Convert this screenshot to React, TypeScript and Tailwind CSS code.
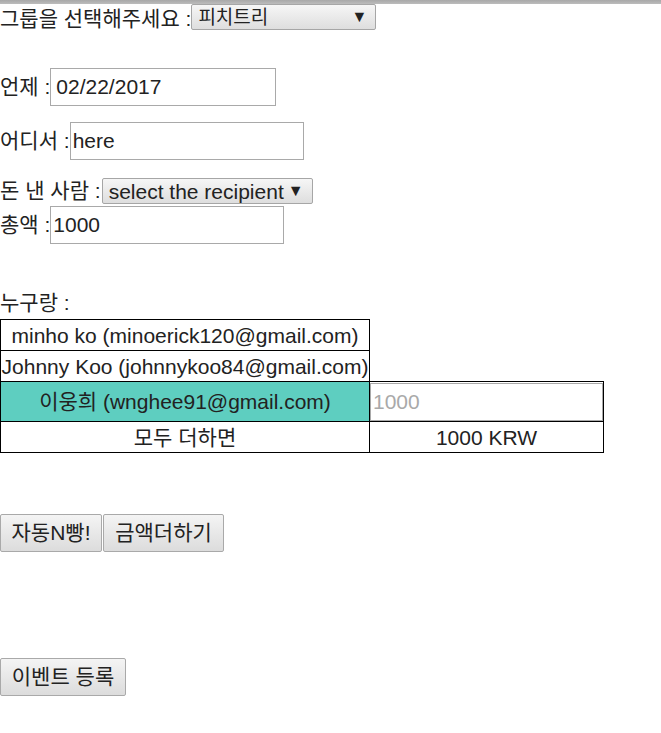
import React from 'react';

const font = { fontFamily: '"Liberation Sans", Arial, "Noto Sans CJK KR", sans-serif' };

function Select({ value, className }: { value: string; className: string }) {
  return (
    <div
      className={`flex items-center justify-between border border-[#a6a6a6] rounded-[2px] bg-gradient-to-b from-[#f6f6f6] to-[#dedede] pl-[6px] pr-[8px] ${className}`}
    >
      <span className="leading-none">{value}</span>
      <span className="text-[16px] leading-none text-[#222]">▼</span>
    </div>
  );
}

function Field({ label, value, width }: { label: string; value: string; width: string }) {
  return (
    <div className="flex items-center h-[38px]">
      <span className="whitespace-pre">{label}</span>
      <div className={`h-[38px] border border-[#a9a9a9] flex items-center px-[2px] ${width}`}>{value}</div>
    </div>
  );
}

function Button({ children, className = '' }: { children: React.ReactNode; className?: string }) {
  return (
    <button
      className={`h-[38px] px-[10px] border border-[#a9a9a9] rounded-[2px] bg-gradient-to-b from-[#f4f4f4] to-[#dcdcdc] text-[#222] ${className}`}
    >
      {children}
    </button>
  );
}

export default function App() {
  const members = ['minho ko (minoerick120@gmail.com)', 'Johnny Koo (johnnykoo84@gmail.com)'];

  return (
    <div className="w-[661px] h-[733px] bg-white text-[21px] text-[#222] overflow-hidden" style={font}>
      <div className="h-[4px] bg-gradient-to-b from-[#a8a8a8] to-[#bcbcbc]" />

      <div className="flex items-center h-[26px]">
        <span className="whitespace-pre mt-[3px]">그룹을 선택해주세요 :</span>
        <Select value="피치트리" className="w-[185px] h-[26px] text-[19px]" />
      </div>

      <div className="mt-[38px]">
        <Field label="언제 :" value="02/22/2017" width="w-[226px] pl-[5px]" />
      </div>
      <div className="mt-[16px]">
        <Field label="어디서 :" value="here" width="w-[234px]" />
      </div>

      <div className="flex items-center h-[26px] mt-[18px]">
        <span className="whitespace-pre">돈 낸 사람 :</span>
        <Select value="select the recipient" className="w-[211px] h-[26px] ml-[1px]" />
      </div>
      <div className="mt-[2px]">
        <Field label="총액 :" value="1000" width="w-[234px]" />
      </div>

      <div className="mt-[47px] h-[24px] leading-[24px] whitespace-pre">누구랑 : </div>

      <table className="mt-[4px] border-collapse">
        <tbody>
          {members.map((m) => (
            <tr key={m} className="h-[31px]">
              <td className="border border-black w-[369px] p-0 text-center whitespace-nowrap leading-none">{m}</td>
              <td className="w-[234px] p-0" />
            </tr>
          ))}
          <tr className="h-[40px]">
            <td className="border border-black bg-[#5ecec0] p-0 text-center leading-none">이웅희 (wnghee91@gmail.com)</td>
            <td className="border border-black p-0">
              <div className="h-[38px] border border-[#a9a9a9] flex items-center px-[2px] text-[#a9a9a9]">1000</div>
            </td>
          </tr>
          <tr className="h-[31px]">
            <td className="border border-black p-0 text-center leading-none">모두 더하면</td>
            <td className="border border-black p-0 text-center leading-none">1000 KRW</td>
          </tr>
        </tbody>
      </table>

      <div className="flex mt-[61px] gap-[1px]">
        <Button className="w-[102px]">자동N빵!</Button>
        <Button className="w-[121px]">금액더하기</Button>
      </div>

      <div className="mt-[106px]">
        <Button className="w-[126px]">이벤트 등록</Button>
      </div>
    </div>
  );
}
